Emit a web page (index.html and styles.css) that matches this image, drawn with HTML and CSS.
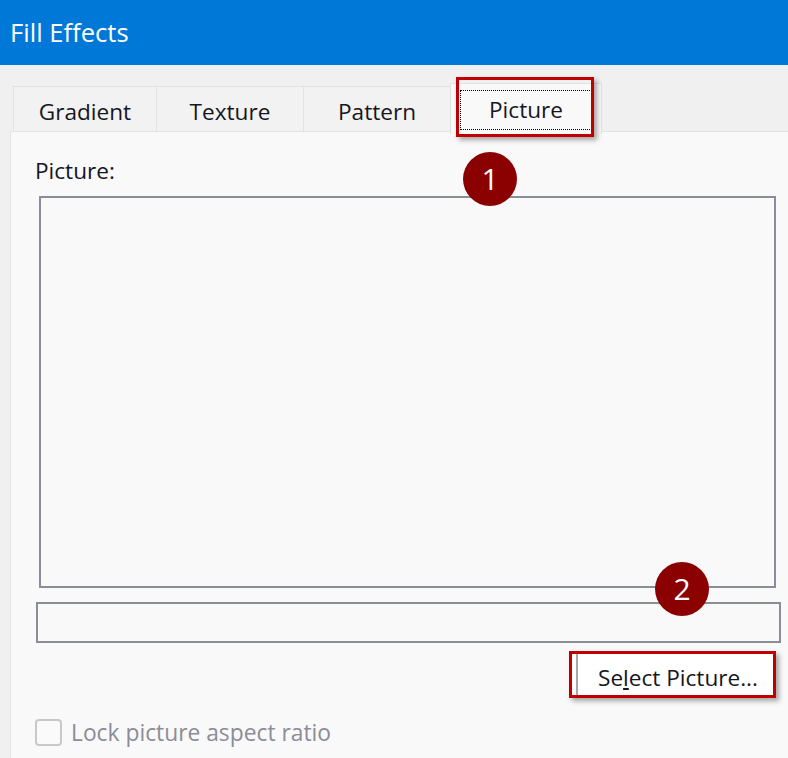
FILE: index.html
```html
<!DOCTYPE html>
<html lang="en">
<head>
    <meta charset="UTF-8">
    <title>Fill Effects</title>
    <link rel="stylesheet" href="styles.css">
</head>
<body>

    <div class="titlebar">Fill Effects</div>

    <div class="dialog">
        <div class="tabs">
            <div class="tab">Gradient</div>
            <div class="tab">Texture</div>
            <div class="tab">Pattern</div>
            <div class="tab active">
                <span class="focus">Picture</span>
                <div class="mark-box"></div>
            </div>
        </div>

        <div class="panel">
            <div class="label">Picture:</div>
            <div class="preview"></div>
            <div class="filename"></div>
            <div class="button-row">
                <button class="select-btn">Se<u>l</u>ect Picture...</button>
            </div>
            <label class="lock">
                <span class="checkbox"></span>
                Lock picture aspect ratio
            </label>

            <!-- 注釈の番号 -->
            <div class="badge badge-1">1</div>
            <div class="badge badge-2">2</div>
        </div>
    </div>

</body>
</html>
```

FILE: styles.css
```css
body {
    margin: 0;
    width: 788px;
    height: 758px;
    overflow: hidden;
    background-color: #f0f0f0;
    font-family: 'Open Sans', 'Noto Sans', sans-serif;
    color: #16161e;
}
.titlebar {
    height: 65px;
    line-height: 65px;
    padding-left: 10px;
    background-color: #0078d7;
    color: #ffffff;
    font-size: 25.6px;
}
.dialog {
    padding-left: 10px;
}
.tabs {
    display: flex;
    align-items: flex-end;
    padding-top: 18px;
    padding-left: 3px;
    height: 48px;
    position: relative;
    z-index: 1;
}
.tab {
    width: 142px;
    height: 39px;
    padding-top: 5px;
    line-height: 40px;
    text-align: center;
    font-size: 22.6px;
    background-color: #f2f2f2;
    border: 1px solid #e2e2e2;
    border-bottom: none;
    margin-right: -1px;
}
.tab:nth-child(2),
.tab:nth-child(3) {
    width: 146px;
}
/* 選択中のタブ */
.tab.active {
    position: relative;
    width: 150px;
    height: 47px;
    padding-top: 3px;
    margin-bottom: -3px;
    background-color: #f9f9f9;
}
.tab.active .focus {
    display: block;
    margin: 3px 9px 0;
    height: 38px;
    line-height: 38px;
    border: 1px dotted #000;
}
.mark-box {
    position: absolute;
    left: 5px;
    top: -7px;
    width: 132px;
    height: 54px;
    border: 3px solid #c00000;
    box-shadow: 3px 3px 5px rgba(0, 0, 0, 0.35);
}
.panel {
    position: relative;
    height: 626px;
    padding: 24px 0 0 25px;
    background-color: #f9f9f9;
    border-top: 1px solid #e3e3e3;
    border-left: 1px solid #e3e3e3;
}
.label {
    font-size: 22.6px;
    line-height: 30px;
    margin-left: -1px;
}
.preview {
    width: 733px;
    height: 388px;
    margin: 10px 0 0 3px;
    border: 2px solid #8b8e96;
}
.filename {
    width: 741px;
    height: 37px;
    margin-top: 14px;
    border: 2px solid #8b8e96;
}
.button-row {
    display: flex;
    justify-content: flex-end;
    width: 740px;
    margin-top: 8px;
}
.select-btn {
    width: 207px;
    height: 47px;
    padding: 5px 0 0 26px;
    text-align: left;
    font-family: inherit;
    font-size: 22.6px;
    color: #16161e;
    background-color: #ffffff;
    border: 3px solid #c00000;
    box-shadow: inset 4px 0 0 #ffffff, inset 6px 0 0 #a8a8a8, 3px 3px 5px rgba(0, 0, 0, 0.35);
}
.lock {
    display: flex;
    align-items: center;
    gap: 9px;
    margin-top: 19px;
    margin-left: -1px;
    font-size: 22.8px;
    color: #8c8c98;
}
.checkbox {
    width: 23px;
    height: 23px;
    border: 2px solid #c8c8c8;
    border-radius: 4px;
    background-color: #fafafa;
}
.badge {
    position: absolute;
    width: 54px;
    height: 54px;
    border-radius: 50%;
    background-color: #8b0000;
    color: #ffffff;
    font-size: 30px;
    line-height: 54px;
    text-align: center;
}
.badge-1 {
    left: 452px;
    top: 20px;
}
.badge-2 {
    left: 644px;
    top: 430px;
}
```
